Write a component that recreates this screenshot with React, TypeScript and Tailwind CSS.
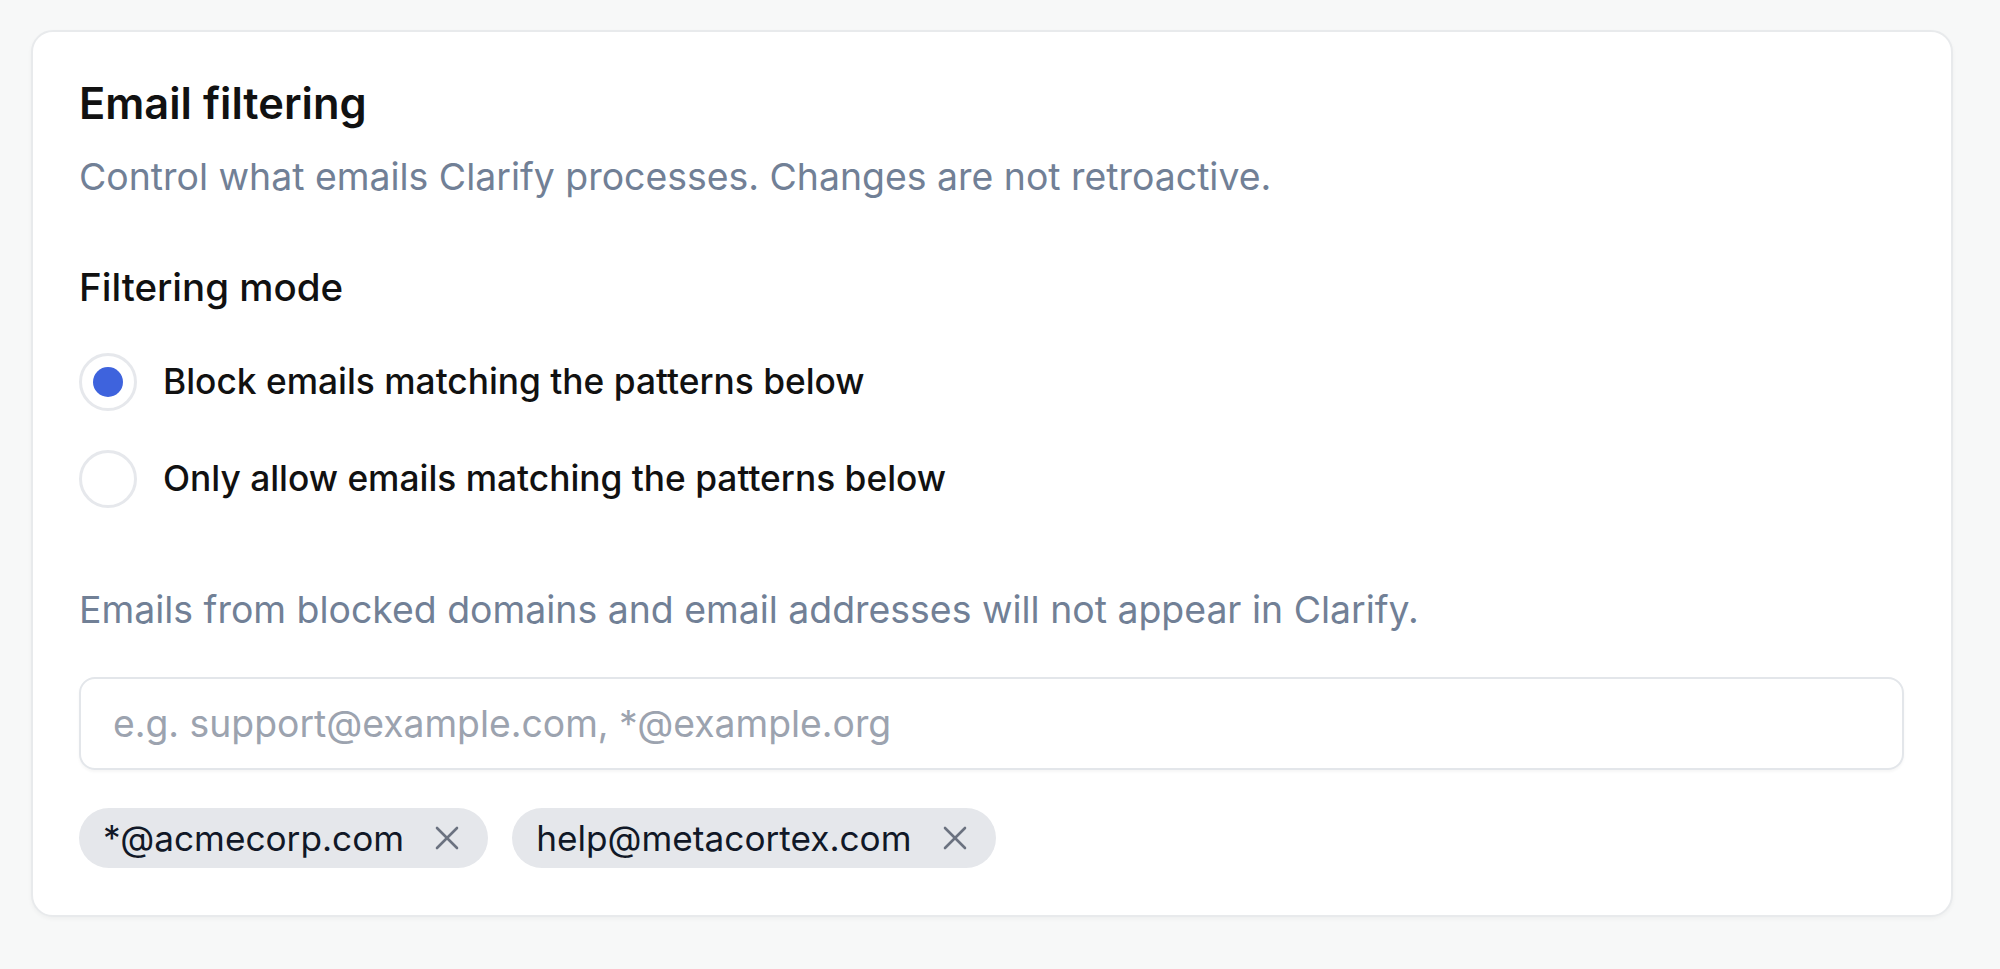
import React from "react";

const patterns = ["*@acmecorp.com", "help@metacortex.com"];

const CloseIcon = () => (
  <svg width="24" height="24" viewBox="0 0 24 24" fill="none" stroke="currentColor" strokeWidth="2.6" strokeLinecap="round">
    <line x1="2" y1="2" x2="22" y2="22" />
    <line x1="22" y1="2" x2="2" y2="22" />
  </svg>
);

const Radio = ({ checked, label }: { checked?: boolean; label: string }) => (
  <label className="flex items-center h-[60px] gap-[26px] cursor-pointer">
    <span className="w-[58px] h-[58px] rounded-full border-[3px] border-[#e6e8ec] bg-white flex items-center justify-center shrink-0">
      {checked && <span className="w-[30px] h-[30px] rounded-full bg-[#3e63dd]" />}
    </span>
    <span className="text-[35.3px] leading-[44px] font-medium text-[#111111]">{label}</span>
  </label>
);

export default function App() {
  return (
    <div className="min-h-screen bg-[#f7f8f8] pt-[30px] pl-[31px] font-['Inter',sans-serif]">
      <div className="w-[1922px] h-[887px] bg-white border-2 border-[#e8eaec] rounded-[22px] shadow-[0_2px_4px_rgba(0,0,0,0.04)] pl-[46px] pr-[47px] pt-[47px] flex flex-col">
        <h2 className="text-[43.4px] leading-[48px] font-semibold text-[#111111]">Email filtering</h2>
        <p className="mt-[28px] text-[37.4px] leading-[44px] text-[#718096]">
          Control what emails Clarify processes. Changes are not retroactive.
        </p>

        <h3 className="mt-[66px] text-[38.5px] leading-[44px] font-medium text-[#111111]">Filtering mode</h3>
        <div className="mt-[43px] flex flex-col gap-[37px]">
          <Radio checked label="Block emails matching the patterns below" />
          <Radio label="Only allow emails matching the patterns below" />
        </div>

        <p className="mt-[79px] text-[37.4px] leading-[44px] text-[#718096]">
          Emails from blocked domains and email addresses will not appear in Clarify.
        </p>

        <input
          className="mt-[45px] h-[93px] w-full rounded-[16px] border-2 border-[#e3e6ea] shadow-[0_2px_3px_rgba(0,0,0,0.04)] px-[32px] text-[37.3px] text-[#111111] placeholder:text-[#9ca3af] outline-none"
          placeholder="e.g. support@example.com, *@example.org"
        />

        <div className="mt-[38px] flex gap-[24px]">
          {patterns.map((p) => (
            <span
              key={p}
              className="h-[60px] rounded-full bg-[#e5e7eb] pl-[24px] pr-[29px] flex items-center gap-[31px] text-[35.2px] text-[#111827]"
            >
              {p}
              <span className="text-[#6b7280] flex">
                <CloseIcon />
              </span>
            </span>
          ))}
        </div>
      </div>
    </div>
  );
}
